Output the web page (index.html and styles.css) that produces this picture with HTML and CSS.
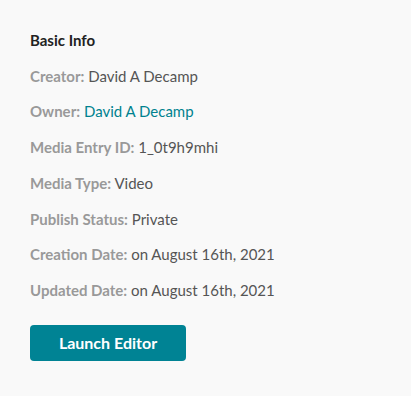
FILE: index.html
```html
<!DOCTYPE html>
<html>
<head>
<meta charset="utf-8">
<link rel="stylesheet" href="styles.css">
</head>
<body>
<div class="panel">
  <h3 class="title">Basic Info</h3>
  <div class="row"><span class="label">Creator:</span> David A Decamp</div>
  <div class="row"><span class="label">Owner:</span> <a class="link" href="#">David A Decamp</a></div>
  <div class="row"><span class="label">Media Entry ID:</span> 1_0t9h9mhi</div>
  <div class="row"><span class="label">Media Type:</span> Video</div>
  <div class="row"><span class="label">Publish Status:</span> Private</div>
  <div class="row"><span class="label">Creation Date:</span> on August 16th, 2021</div>
  <div class="row"><span class="label">Updated Date:</span> on August 16th, 2021</div>
  <button class="btn">Launch Editor</button>
</div>
</body>
</html>
```
FILE: styles.css
```css
html, body {
  margin: 0;
  padding: 0;
  background: #f9f9f9;
}
.panel {
  font-family: Lato, "Liberation Sans", sans-serif;
  padding: 30px 30px;
  display: flex;
  flex-direction: column;
  align-items: flex-start;
}
.title {
  margin: 0 0 15.5px;
  font-size: 15px;
  font-weight: 700;
  color: #222;
  line-height: 20px;
}
.row {
  font-size: 15px;
  line-height: 20px;
  color: #555;
  margin-bottom: 15.8px;
}
.label {
  font-weight: 700;
  color: #999;
}
.link {
  color: #00828f;
  text-decoration: none;
}
.btn {
  margin-top: 8.5px;
  width: 156px;
  height: 36px;
  border: none;
  border-radius: 4px;
  background: #008394;
  color: #fff;
  font-family: Lato, "Liberation Sans", sans-serif;
  font-weight: 700;
  font-size: 16px;
}
```
